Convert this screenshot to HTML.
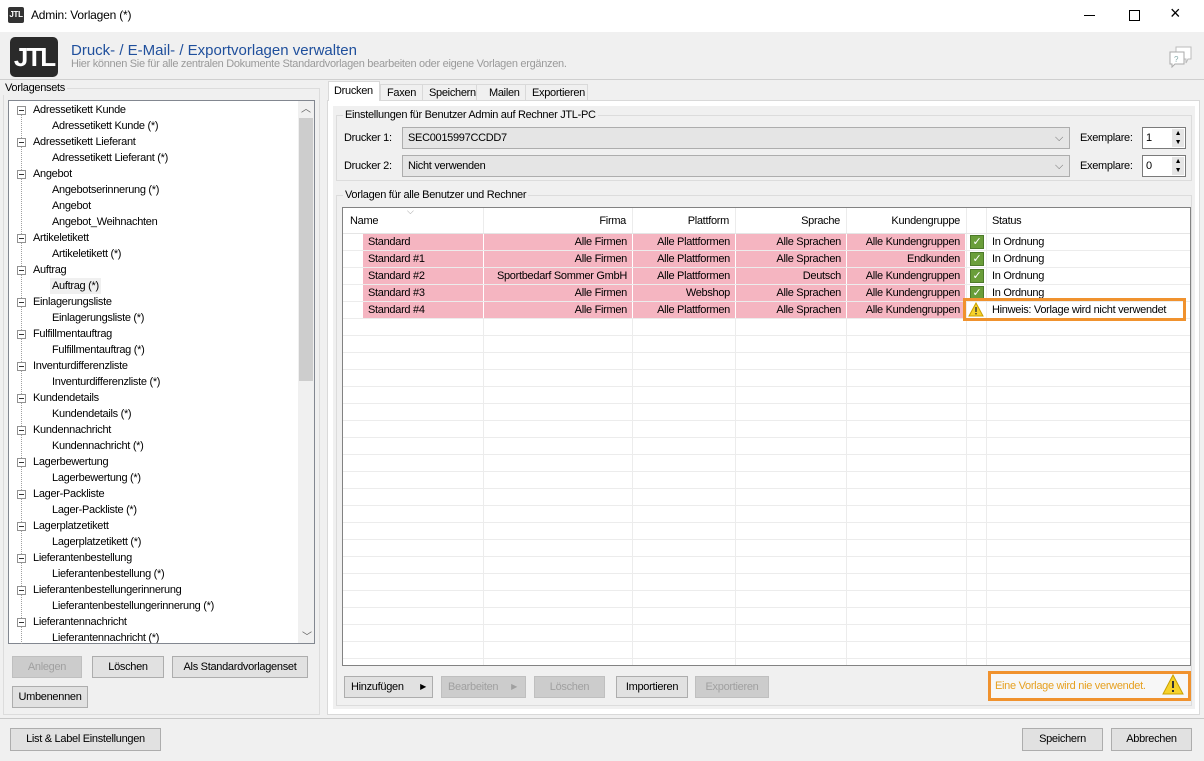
<!DOCTYPE html>
<html><head><meta charset="utf-8"><style>
*{box-sizing:border-box;margin:0;padding:0}
body{width:1204px;height:761px;background:#f0f0f0;font-family:"Liberation Sans",sans-serif;font-size:11px;color:#000;position:relative;overflow:hidden;letter-spacing:-0.3px}
.a{position:absolute;white-space:nowrap}
.btn{position:absolute;height:22px;border:1px solid #adadad;background:#e1e1e1;text-align:center;line-height:20px}
.dis{color:#a0a0a0;background:#cccccc;border-color:#bfbfbf}
.grp{position:absolute;border:1px solid #dcdcdc}
.gl{position:absolute;background:#f0f0f0;padding:0 2px;top:-8px;left:6px;line-height:14px}
.tree div{position:absolute;height:16px;line-height:16px}
.pm{position:absolute;width:9px;height:9px;border:1px solid #919191;background:#fff}
.pm:after{content:"";position:absolute;left:1px;top:3px;width:5px;height:1px;background:#333}
.row{position:absolute;left:343px;width:846px;height:17px;border-bottom:1px solid #ececec}
.c{position:absolute;top:0;height:16px;line-height:17px;background:#f5b5c1;border-right:1px solid #fff;padding:0 5px}
.r{text-align:right}
.chk{position:absolute;left:627px;top:1px;width:14px;height:14px;background:#6a9e3a;border:1px solid #4d7a2a;color:#fff;font-size:11px;line-height:12px;text-align:center}
</style></head><body>
<div class="a" style="left:0;top:0;width:1204px;height:32px;background:#fff"></div>
<div class="a" style="left:8px;top:7px;width:16px;height:16px;background:#333;border-radius:2px;color:#fff;font-size:8px;font-weight:bold;line-height:16px;text-align:center">JTL</div>
<div class="a" style="left:31px;top:8px;font-size:12px;letter-spacing:-0.2px">Admin: Vorlagen (*)</div>
<div class="a" style="left:1084px;top:15px;width:11px;height:1px;background:#000"></div>
<div class="a" style="left:1129px;top:10px;width:11px;height:11px;border:1px solid #000"></div>
<div class="a" style="left:1170px;top:3px;font-size:18px;font-weight:300">×</div>
<div class="a" style="left:10px;top:37px;width:48px;height:40px;background:#2a2a2a;border-radius:5px;color:#fff;font-size:26px;font-weight:bold;line-height:40px;text-align:center;letter-spacing:-2px">JTL</div>
<div class="a" style="left:71px;top:42px;font-size:15px;color:#1f4f9c;letter-spacing:0">Druck- / E-Mail- / Exportvorlagen verwalten</div>
<div class="a" style="left:71px;top:58px;font-size:11px;color:#9a9a9a;letter-spacing:-0.3px">Hier können Sie für alle zentralen Dokumente Standardvorlagen bearbeiten oder eigene Vorlagen ergänzen.</div>
<svg class="a" style="left:1168px;top:44px" width="26" height="24"><path d="M8 3h15v12h-3l-2 4v-4H8z" fill="#fff" stroke="#bbb"/><path d="M2 8h14v12H7l-3 3v-3H2z" fill="#fff" stroke="#aaa"/><text x="6" y="18" font-size="8" fill="#8aa">?</text></svg>
<div class="a" style="left:0;top:79px;width:1204px;height:1px;background:#cfcfcf"></div>
<div class="grp" style="left:3px;top:88px;width:317px;height:627px"><div class="gl" style="left:-1px;padding-left:2px">Vorlagensets</div></div>
<div class="a" style="left:8px;top:100px;width:307px;height:544px;background:#fff;border:1px solid #828790"></div>
<div class="a" style="left:298px;top:101px;width:16px;height:542px;background:#f0f0f0"></div>
<div class="a" style="left:299px;top:118px;width:14px;height:263px;background:#cdcdcd"></div>
<div class="a" style="left:301px;top:100px;color:#606060;font-size:10px">︿</div>
<div class="a" style="left:302px;top:628px;color:#606060;font-size:10px">﹀</div>
<div class="a" style="left:21px;top:110px;width:0;height:534px;border-left:1px dotted #a0a0a0"></div>
<div class="tree">
<div style="left:33px;top:102px">Adressetikett Kunde</div><div style="left:52px;top:118px">Adressetikett Kunde (*)</div>
<div style="left:33px;top:134px">Adressetikett Lieferant</div><div style="left:52px;top:150px">Adressetikett Lieferant (*)</div>
<div style="left:33px;top:166px">Angebot</div><div style="left:52px;top:182px">Angebotserinnerung (*)</div><div style="left:52px;top:198px">Angebot</div><div style="left:52px;top:214px">Angebot_Weihnachten</div>
<div style="left:33px;top:230px">Artikeletikett</div><div style="left:52px;top:246px">Artikeletikett (*)</div>
<div style="left:33px;top:262px">Auftrag</div><div style="left:50px;top:278px;background:#f0f0f0;padding:0 2px">Auftrag (*)</div>
<div style="left:33px;top:294px">Einlagerungsliste</div><div style="left:52px;top:310px">Einlagerungsliste (*)</div>
<div style="left:33px;top:326px">Fulfillmentauftrag</div><div style="left:52px;top:342px">Fulfillmentauftrag (*)</div>
<div style="left:33px;top:358px">Inventurdifferenzliste</div><div style="left:52px;top:374px">Inventurdifferenzliste (*)</div>
<div style="left:33px;top:390px">Kundendetails</div><div style="left:52px;top:406px">Kundendetails (*)</div>
<div style="left:33px;top:422px">Kundennachricht</div><div style="left:52px;top:438px">Kundennachricht (*)</div>
<div style="left:33px;top:454px">Lagerbewertung</div><div style="left:52px;top:470px">Lagerbewertung (*)</div>
<div style="left:33px;top:486px">Lager-Packliste</div><div style="left:52px;top:502px">Lager-Packliste (*)</div>
<div style="left:33px;top:518px">Lagerplatzetikett</div><div style="left:52px;top:534px">Lagerplatzetikett (*)</div>
<div style="left:33px;top:550px">Lieferantenbestellung</div><div style="left:52px;top:566px">Lieferantenbestellung (*)</div>
<div style="left:33px;top:582px">Lieferantenbestellungerinnerung</div><div style="left:52px;top:598px">Lieferantenbestellungerinnerung (*)</div>
<div style="left:33px;top:614px">Lieferantennachricht</div><div style="left:52px;top:630px;height:13px;overflow:hidden">Lieferantennachricht (*)</div>
</div>
<div class="pm" style="left:17px;top:106px"></div><div class="pm" style="left:17px;top:138px"></div><div class="pm" style="left:17px;top:170px"></div><div class="pm" style="left:17px;top:234px"></div><div class="pm" style="left:17px;top:266px"></div><div class="pm" style="left:17px;top:298px"></div><div class="pm" style="left:17px;top:330px"></div><div class="pm" style="left:17px;top:362px"></div><div class="pm" style="left:17px;top:394px"></div><div class="pm" style="left:17px;top:426px"></div><div class="pm" style="left:17px;top:458px"></div><div class="pm" style="left:17px;top:490px"></div><div class="pm" style="left:17px;top:522px"></div><div class="pm" style="left:17px;top:554px"></div><div class="pm" style="left:17px;top:586px"></div><div class="pm" style="left:17px;top:618px"></div>
<div class="btn dis" style="left:12px;top:656px;width:70px">Anlegen</div>
<div class="btn" style="left:92px;top:656px;width:72px">Löschen</div>
<div class="btn" style="left:172px;top:656px;width:136px">Als Standardvorlagenset</div>
<div class="btn" style="left:12px;top:686px;width:76px">Umbenennen</div>
<div class="a" style="left:327px;top:100px;width:873px;height:615px;background:#fff;border:1px solid #d9d9d9"></div>
<div class="a" style="left:380px;top:84px;width:208px;height:17px;background:#f0f0f0;border:1px solid #d9d9d9"></div>
<div class="a" style="left:422px;top:84px;width:1px;height:16px;background:#d9d9d9"></div><div class="a" style="left:476px;top:84px;width:1px;height:16px;background:#d9d9d9"></div><div class="a" style="left:525px;top:84px;width:1px;height:16px;background:#d9d9d9"></div>
<div class="a" style="left:328px;top:81px;width:52px;height:20px;background:#fff;border:1px solid #d9d9d9;border-bottom:none"></div>
<div class="a" style="left:334px;top:85px">Drucken</div><div class="a" style="left:387px;top:87px">Faxen</div><div class="a" style="left:429px;top:87px">Speichern</div><div class="a" style="left:489px;top:87px">Mailen</div><div class="a" style="left:532px;top:87px">Exportieren</div>
<div class="a" style="left:333px;top:106px;width:862px;height:603px;background:#f0f0f0"></div>
<div class="grp" style="left:336px;top:115px;width:856px;height:66px"><div class="gl">Einstellungen für Benutzer Admin auf Rechner JTL-PC</div></div>
<div class="a" style="left:344px;top:132px">Drucker 1:</div>
<div class="a" style="left:402px;top:127px;width:668px;height:22px;background:#e5e5e5;border:1px solid #adadad;padding-left:5px;line-height:21px">SEC0015997CCDD7<span style="position:absolute;right:6px;color:#666">⌵</span></div>
<div class="a" style="left:1080px;top:132px">Exemplare:</div>
<div class="a" style="left:1142px;top:127px;width:44px;height:22px;background:#fff;border:1px solid #7a7a7a;padding-left:3px;line-height:20px">1<span style="position:absolute;right:1px;top:1px;width:12px;height:18px;background:#e5e5e5;font-size:7px;line-height:9px;text-align:center">▲<br>▼</span></div>
<div class="a" style="left:344px;top:160px">Drucker 2:</div>
<div class="a" style="left:402px;top:155px;width:668px;height:22px;background:#e5e5e5;border:1px solid #adadad;padding-left:5px;line-height:21px">Nicht verwenden<span style="position:absolute;right:6px;color:#666">⌵</span></div>
<div class="a" style="left:1080px;top:160px">Exemplare:</div>
<div class="a" style="left:1142px;top:155px;width:44px;height:22px;background:#fff;border:1px solid #7a7a7a;padding-left:3px;line-height:20px">0<span style="position:absolute;right:1px;top:1px;width:12px;height:18px;background:#e5e5e5;font-size:7px;line-height:9px;text-align:center">▲<br>▼</span></div>
<div class="grp" style="left:336px;top:195px;width:856px;height:511px"><div class="gl">Vorlagen für alle Benutzer und Rechner</div></div>
<div class="a" style="left:342px;top:207px;width:849px;height:459px;background:#fff;border:1px solid #828282"></div>
<div class="a" style="left:343px;top:234px;width:847px;height:431px;background:repeating-linear-gradient(#fff 0 16px,#ececec 16px 17px)"></div>
<div class="a" style="left:483px;top:208px;width:1px;height:457px;background:#ececec"></div>
<div class="a" style="left:632px;top:208px;width:1px;height:457px;background:#ececec"></div>
<div class="a" style="left:735px;top:208px;width:1px;height:457px;background:#ececec"></div>
<div class="a" style="left:846px;top:208px;width:1px;height:457px;background:#ececec"></div>
<div class="a" style="left:966px;top:208px;width:1px;height:457px;background:#ececec"></div>
<div class="a" style="left:986px;top:208px;width:1px;height:457px;background:#ececec"></div>
<div class="a" style="left:343px;top:233px;width:847px;height:1px;background:#e5e5e5"></div>
<div class="a" style="left:407px;top:206px;color:#999;font-size:9px">⌵</div>
<div class="a" style="left:350px;top:215px">Name</div>
<div class="a" style="left:483px;top:215px;width:143px;text-align:right">Firma</div>
<div class="a" style="left:632px;top:215px;width:97px;text-align:right">Plattform</div>
<div class="a" style="left:735px;top:215px;width:105px;text-align:right">Sprache</div>
<div class="a" style="left:846px;top:215px;width:114px;text-align:right">Kundengruppe</div>
<div class="a" style="left:992px;top:215px">Status</div>

<div class="row" style="top:234px"><div class="c" style="left:20px;width:121px">Standard</div><div class="c r" style="left:141px;width:149px">Alle Firmen</div><div class="c r" style="left:290px;width:103px">Alle Plattformen</div><div class="c r" style="left:393px;width:111px">Alle Sprachen</div><div class="c r" style="left:504px;width:119px">Alle Kundengruppen</div><div class="chk">✓</div><div class="a" style="left:649px;top:2px">In Ordnung</div></div>
<div class="row" style="top:251px"><div class="c" style="left:20px;width:121px">Standard #1</div><div class="c r" style="left:141px;width:149px">Alle Firmen</div><div class="c r" style="left:290px;width:103px">Alle Plattformen</div><div class="c r" style="left:393px;width:111px">Alle Sprachen</div><div class="c r" style="left:504px;width:119px">Endkunden</div><div class="chk">✓</div><div class="a" style="left:649px;top:2px">In Ordnung</div></div>
<div class="row" style="top:268px"><div class="c" style="left:20px;width:121px">Standard #2</div><div class="c r" style="left:141px;width:149px;padding:0 5px 0 0">Sportbedarf Sommer GmbH</div><div class="c r" style="left:290px;width:103px">Alle Plattformen</div><div class="c r" style="left:393px;width:111px">Deutsch</div><div class="c r" style="left:504px;width:119px">Alle Kundengruppen</div><div class="chk">✓</div><div class="a" style="left:649px;top:2px">In Ordnung</div></div>
<div class="row" style="top:285px"><div class="c" style="left:20px;width:121px">Standard #3</div><div class="c r" style="left:141px;width:149px">Alle Firmen</div><div class="c r" style="left:290px;width:103px">Webshop</div><div class="c r" style="left:393px;width:111px">Alle Sprachen</div><div class="c r" style="left:504px;width:119px">Alle Kundengruppen</div><div class="chk">✓</div><div class="a" style="left:649px;top:2px">In Ordnung</div></div>
<div class="row" style="top:302px"><div class="c" style="left:20px;width:121px">Standard #4</div><div class="c r" style="left:141px;width:149px">Alle Firmen</div><div class="c r" style="left:290px;width:103px">Alle Plattformen</div><div class="c r" style="left:393px;width:111px">Alle Sprachen</div><div class="c r" style="left:504px;width:119px">Alle Kundengruppen</div><div class="a" style="left:649px;top:2px">Hinweis: Vorlage wird nicht verwendet</div></div>
<svg class="a" style="left:968px;top:302px" width="16" height="15"><path d="M8 1L15 14H1z" fill="#f6d22a" stroke="#c9a000"/><rect x="7.3" y="5" width="1.4" height="5" fill="#333"/><rect x="7.3" y="11" width="1.4" height="1.4" fill="#333"/></svg>
<div class="a" style="left:963px;top:298px;width:223px;height:23px;border:3px solid #f0922e"></div>
<div class="btn" style="left:344px;top:676px;width:89px;text-align:left;padding-left:6px">Hinzufügen<span style="position:absolute;right:6px;font-size:8px">▶</span></div>
<div class="btn dis" style="left:441px;top:676px;width:85px;text-align:left;padding-left:6px">Bearbeiten<span style="position:absolute;right:8px;font-size:8px">▶</span></div>
<div class="btn dis" style="left:534px;top:676px;width:71px">Löschen</div>
<div class="btn" style="left:616px;top:676px;width:72px">Importieren</div>
<div class="btn dis" style="left:695px;top:676px;width:74px">Exportieren</div>
<div class="a" style="left:988px;top:671px;width:203px;height:30px;border:3px solid #f0922e;background:#f7f7f7"></div>
<div class="a" style="left:995px;top:680px;color:#e6a020">Eine Vorlage wird nie verwendet.</div>
<svg class="a" style="left:1162px;top:674px" width="22" height="21"><path d="M11 1L21 20H1z" fill="#f6d22a" stroke="#c9a000"/><rect x="10" y="7" width="2" height="7" fill="#333"/><rect x="10" y="16" width="2" height="2" fill="#333"/></svg>
<div class="a" style="left:0;top:718px;width:1204px;height:1px;background:#c8c8c8"></div>
<div class="btn" style="left:10px;top:728px;width:151px;height:23px;line-height:21px">List &amp; Label Einstellungen</div>
<div class="btn" style="left:1022px;top:728px;width:81px;height:23px;line-height:21px">Speichern</div>
<div class="btn" style="left:1111px;top:728px;width:81px;height:23px;line-height:21px">Abbrechen</div>
</body></html>
